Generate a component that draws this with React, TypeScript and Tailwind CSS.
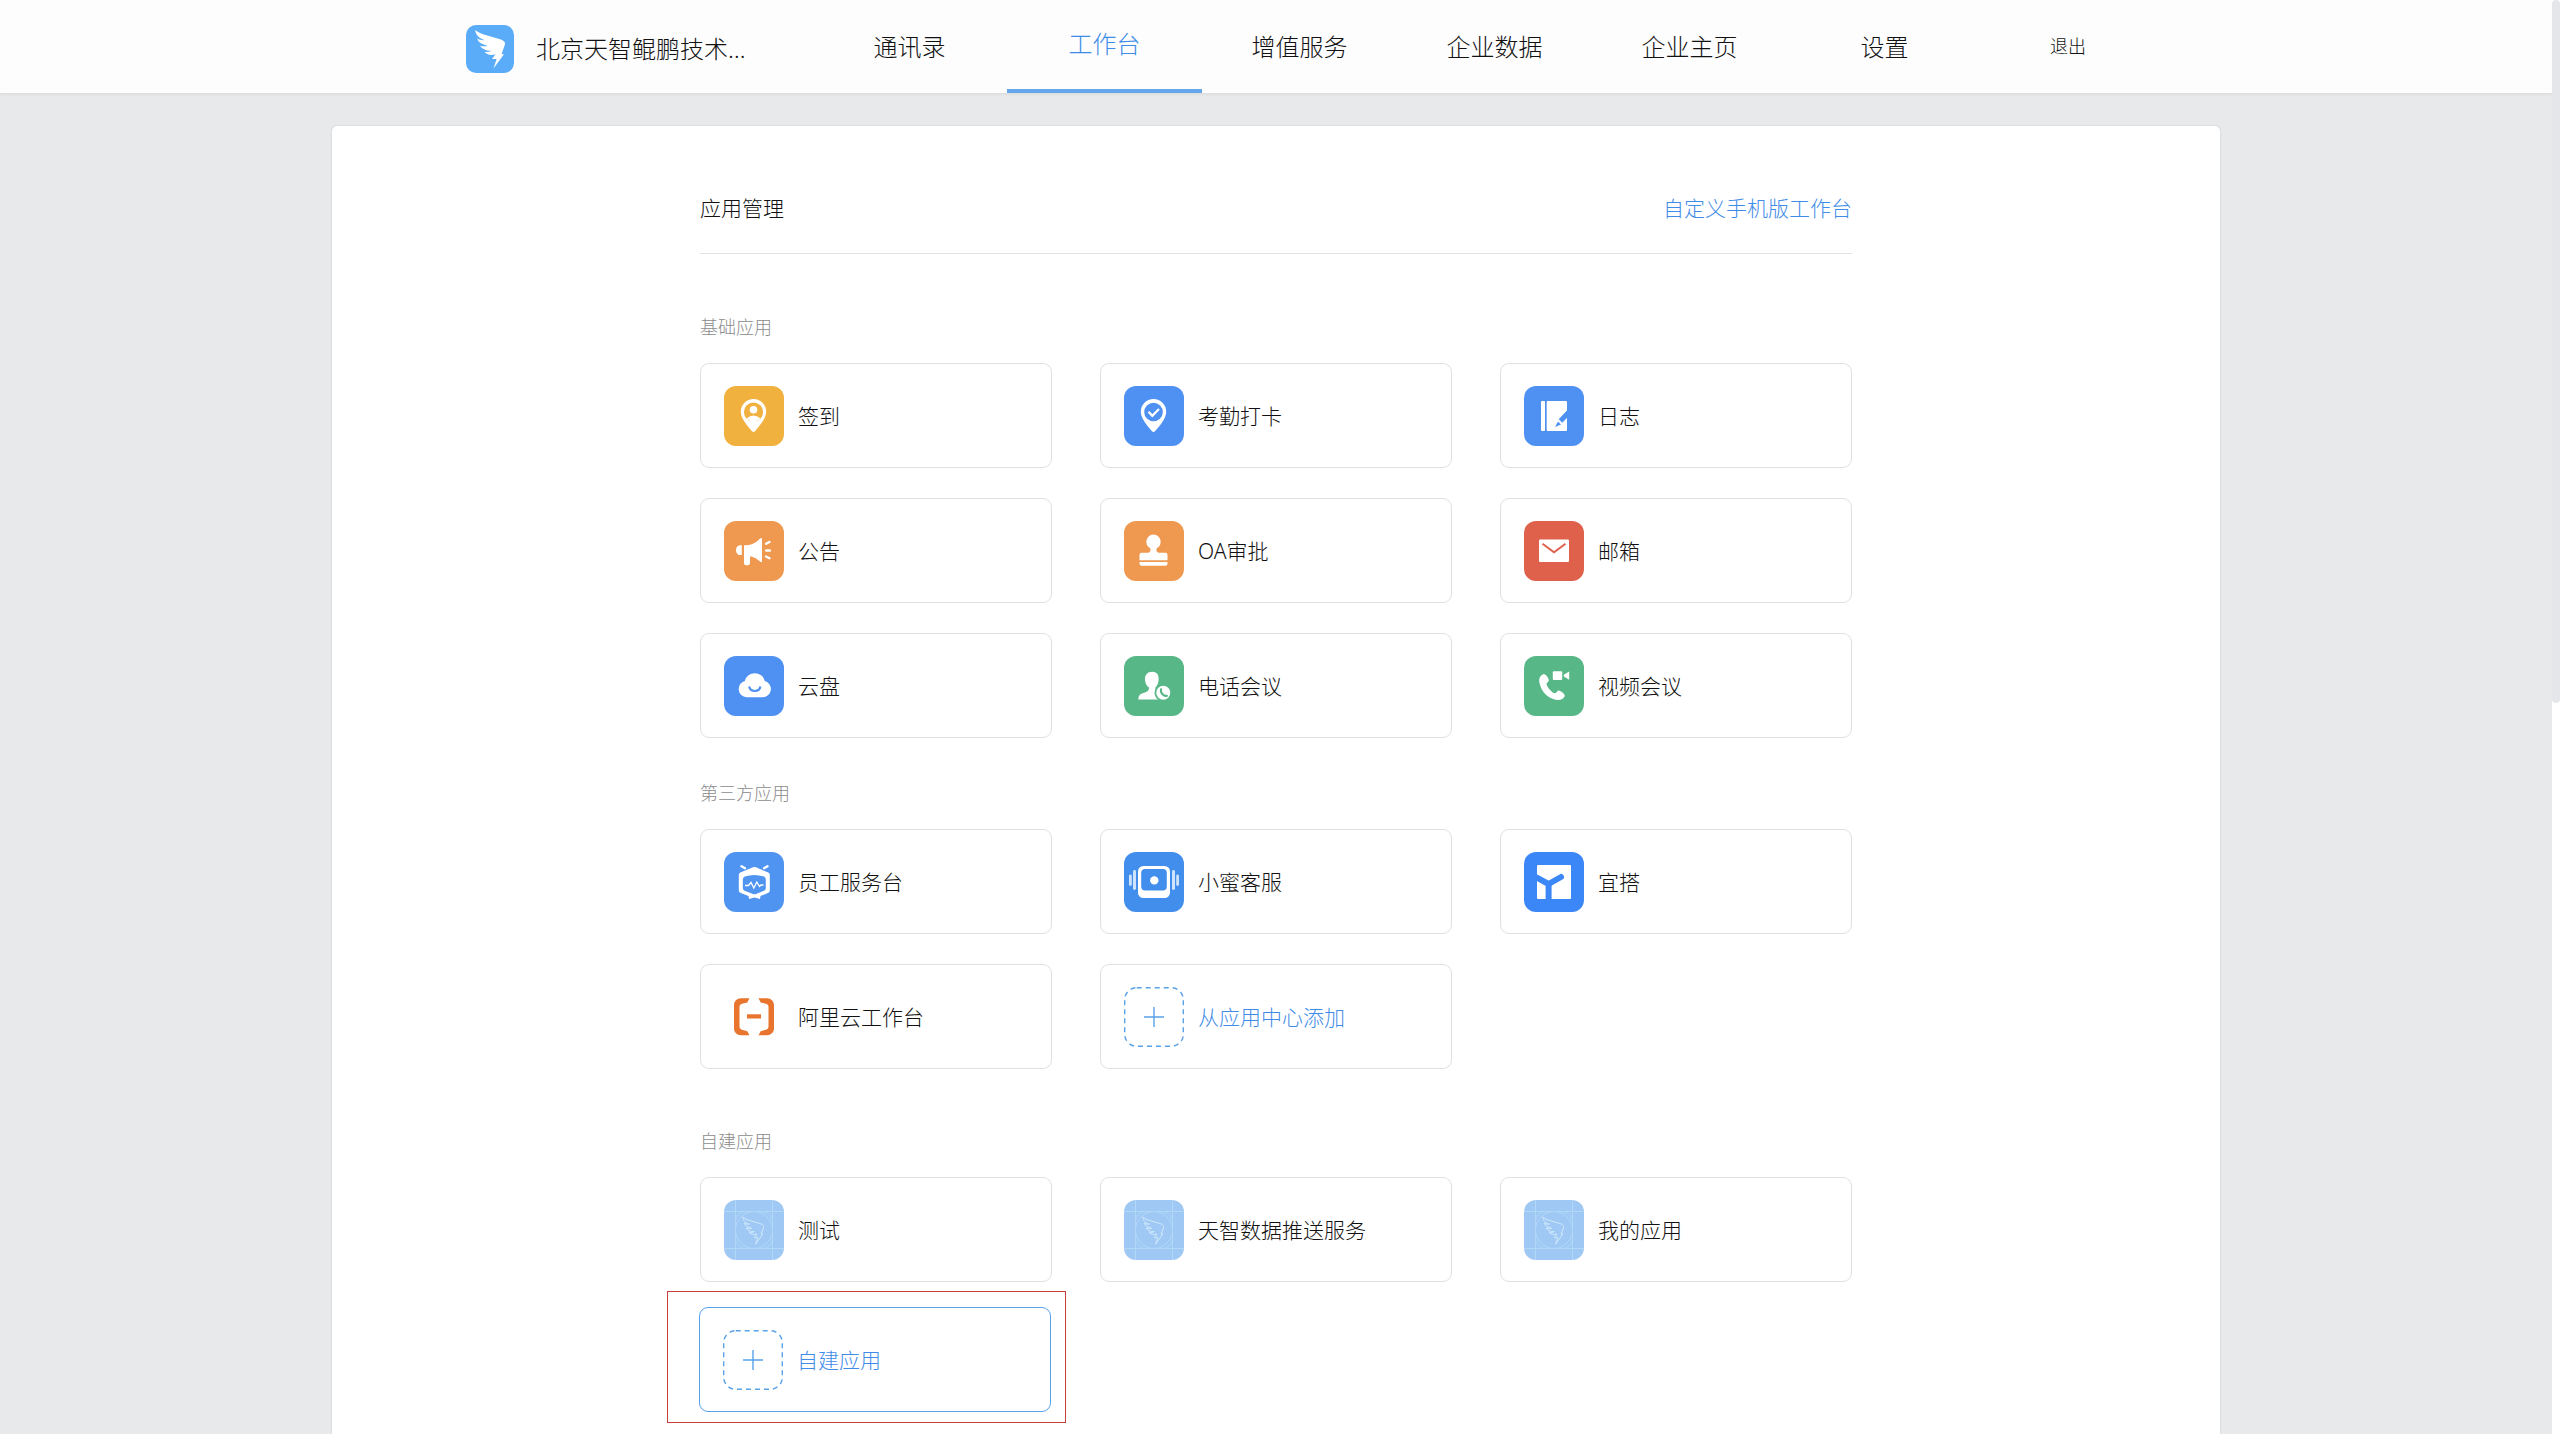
import type { ReactNode } from "react";

const WING =
  "M9.3 5 C14 9.5 26 11.5 34 14.2 C38.5 15.8 39.8 17.2 38.6 20.5 L35.5 29.3 H38 L27.5 43.5 L30.6 34 H26 L29.5 29.3 C24.5 30.8 20.5 29.5 18.3 26.8 C20.8 27.3 23 27 25.5 25.8 C20 26 15.8 23.8 14 20.8 C16.5 21.5 18.8 21.6 21.8 20.8 C15.8 19.6 12 17 11.2 13.6 C13.4 14.8 16 15.4 18.6 15.2 C12.5 13 9.5 9.5 9.3 5 Z";

function Tile({ bg, children }: { bg: string; children: ReactNode }) {
  return (
    <svg viewBox="0 0 60 60" className="size-[60px] shrink-0" aria-hidden="true">
      <rect width="60" height="60" rx="12" fill={bg} />
      {children}
    </svg>
  );
}

const PIN = "M29.5 13 a12.7 12.7 0 0 1 12.7 12.7 C42.2 32 36 39.5 31 45.2 Q29.5 46.8 28 45.2 C23 39.5 16.8 32 16.8 25.7 A12.7 12.7 0 0 1 29.5 13 Z";

const CheckIn = () => (
  <Tile bg="#f0b13f">
    <path d={PIN} fill="#fff" />
    <circle cx="29.5" cy="26" r="9.6" fill="#f0b13f" />
    <circle cx="29.5" cy="23.8" r="3.8" fill="#fff" />
    <path d="M22.5 32.6 Q29.5 26.5 36.5 32.6 L29.5 37 Z" fill="#fff" />
  </Tile>
);

const Attendance = () => (
  <Tile bg="#4f91f2">
    <path d={PIN} fill="#fff" />
    <circle cx="29.5" cy="26" r="9.3" fill="#4f91f2" />
    <path d="M24.5 25.8 L28.3 29.8 L35 23" fill="none" stroke="#fff" strokeWidth="2.2" />
  </Tile>
);

const Journal = () => (
  <Tile bg="#4f91f2">
    <rect x="17" y="15" width="4" height="30" rx="1" fill="#fff" />
    <rect x="22.7" y="15" width="20.3" height="30" rx="1" fill="#fff" />
    <path d="M44.5 26.5 L36.5 35" stroke="#4f91f2" strokeWidth="5" />
    <path d="M34 35.5 L37 38.5 L31 41 Z" fill="#4f91f2" />
    <path d="M34 33.8 L38.7 38.2" stroke="#fff" strokeWidth="1" />
  </Tile>
);

const Notice = () => (
  <Tile bg="#ee9850">
    <path d="M17.8 24.3 V34 H15.8 C13.4 34 12 31.8 12 29.2 C12 26.5 13.4 24.3 15.8 24.3 Z" fill="#fff" />
    <path d="M20 24.3 C27 24.3 31.5 22.5 36 17.5 Q38 16 38 18.5 V40 Q38 42.2 36 40.6 C32.5 37.5 30 36 26 35.2 V42 Q26 44.2 23.8 44.2 H22 Q20 44.2 20 42 Z" fill="#fff" />
    <path d="M42 22.8 L45.5 21 M42.2 29.5 H46 M42 35.5 L45.5 37.3" stroke="#fff" strokeWidth="2.4" strokeLinecap="round" />
  </Tile>
);

const Stamp = () => (
  <Tile bg="#ee9850">
    <circle cx="29.5" cy="20.8" r="7.2" fill="#fff" />
    <path d="M25.8 25 H33.2 C32 28 32 31.5 35 31.8 H41.5 Q43.5 31.8 43.5 34 V39.3 H15.5 V34 Q15.5 31.8 17.5 31.8 H24 C27 31.5 27 28 25.8 25 Z" fill="#fff" />
    <path d="M15.5 41 H43.5 V42.5 Q43.5 44.8 41.5 44.8 H17.5 Q15.5 44.8 15.5 42.5 Z" fill="#fff" />
  </Tile>
);

const Mail = () => (
  <Tile bg="#df614b">
    <rect x="15" y="18.5" width="30" height="22.5" rx="1" fill="#fff" />
    <path d="M18.5 22.8 L30 31.3 L41.5 22.8" fill="none" stroke="#df614b" strokeWidth="2" />
  </Tile>
);

const Cloud = () => (
  <Tile bg="#4f91f2">
    <path d="M22.5 41.3 A8.3 8.3 0 0 1 20.8 25 A10.3 10.3 0 0 1 40.8 25 A8.3 8.3 0 0 1 38.5 41.3 Z" fill="#fff" />
    <path d="M25.2 30.5 Q26 35 30.8 35 Q35.6 35 36.4 30.5" fill="none" stroke="#4f91f2" strokeWidth="2.2" />
  </Tile>
);

const PhoneMeeting = () => (
  <Tile bg="#58b787">
    <path d="M28.3 15.8 C33.5 15.8 35 20 34.6 24 C34.2 28 32.8 30.3 31.5 31.3 V35 L36 38 V43.5 H14.3 Q14.3 38.8 18 37.5 C22 36 25.3 35.6 25 31.5 C22.5 30 21.4 27.5 21 24 C20.6 19 23.5 15.8 28.3 15.8 Z" fill="#fff" />
    <circle cx="39.3" cy="36.8" r="8.8" fill="#58b787" />
    <circle cx="39.3" cy="36.8" r="7" fill="#fff" />
    <path d="M37 33.3 C36 36.5 39.5 40.3 42.8 39.8" fill="none" stroke="#58b787" strokeWidth="2.2" strokeLinecap="round" />
  </Tile>
);

const VideoMeeting = () => (
  <Tile bg="#58b787">
    <path d="M19.5 18 C16 19.5 14.5 23 15.5 27 C17 35 24 43 33 44 C37 44.3 40 42.5 40.8 40 C41 38 36 34.3 34.5 34.6 C33 35 32.5 37.3 31 37.3 C28 37 23 31 22.5 28 C22.5 26.5 25 26 24.8 24 C24.6 22 21.5 17.5 19.5 18 Z" fill="#fff" />
    <rect x="28.8" y="15.2" width="9.4" height="8.8" rx="1" fill="#fff" />
    <path d="M45.2 15.5 V23.7 L39.8 20.4 V18.8 Z" fill="#fff" />
  </Tile>
);

const Robot = () => (
  <Tile bg="#5094f2">
    <path d="M17.5 14.3 L21 16.2 M43.5 14.3 L40 16.2" stroke="#fff" strokeWidth="2.4" strokeLinecap="round" />
    <path d="M29 15.3 Q30.5 14.6 32 15.3 L44.3 20.6 Q45.8 21.3 45.8 23 V38.5 Q45.8 40 44.5 40.8 L36.5 44 L36 47 L30.5 45.5 L25 47 L24.5 44 L16.2 40.8 Q14.8 40 14.8 38.5 V23 Q14.8 21.3 16.3 20.6 Z" fill="#fff" />
    <path d="M18.8 27.5 Q18.8 25.6 20.8 24.6 Q30.3 21.6 40 24.6 Q41.8 25.6 41.8 27.5 V36 Q41.8 38 40 38.8 L32 42 Q30.5 42.6 29 42 L20.6 38.8 Q18.8 38 18.8 36 Z" fill="#5094f2" />
    <path d="M21 33.5 H24.5 L27 30.5 L29.8 36 L32.8 30 L35.5 34.5 L37 33 H39.5" fill="none" stroke="#fff" strokeWidth="1.3" />
  </Tile>
);

const Service = () => (
  <Tile bg="#418eec">
    <rect x="14" y="14" width="32" height="32" rx="5.5" fill="#fff" />
    <rect x="17.2" y="17" width="25.6" height="21.6" rx="4" fill="#418eec" />
    <circle cx="30.3" cy="28.4" r="4.2" fill="#fff" />
    <g fill="#cfe3fb">
      <rect x="9" y="18" width="3" height="20" rx="1.4" />
      <rect x="5" y="22.5" width="2.8" height="11.5" rx="1.4" />
      <rect x="48" y="18" width="3" height="20" rx="1.4" />
      <rect x="52.2" y="22.5" width="2.8" height="11.5" rx="1.4" />
    </g>
  </Tile>
);

const Yida = () => (
  <Tile bg="#3b87f7">
    <rect x="13" y="13" width="34" height="34" rx="1" fill="#fff" />
    <path d="M12 25.2 L24.6 32 V48" fill="none" stroke="#3b87f7" strokeWidth="6" />
    <path d="M24.6 32 L37 25" stroke="#3b87f7" strokeWidth="6" strokeLinecap="round" />
  </Tile>
);

const Aliyun = () => (
  <Tile bg="#fff">
    <g fill="#e8742d">
      <path d="M25.5 11.3 H17 C13 11.3 10 14.3 10 18.3 V41.3 C10 45.3 13 48.3 17 48.3 H25.5 L23.3 44.2 L18 42.8 C16.4 42.3 15.5 41.2 15.5 39.6 V20 C15.5 18.4 16.4 17.3 18 16.8 L23.3 15.4 Z" />
      <path d="M34.5 11.3 H43 C47 11.3 50 14.3 50 18.3 V41.3 C50 45.3 47 48.3 43 48.3 H34.5 L36.7 44.2 L42 42.8 C43.6 42.3 44.5 41.2 44.5 39.6 V20 C44.5 18.4 43.6 17.3 42 16.8 L36.7 15.4 Z" />
      <rect x="23" y="27.3" width="14" height="4.2" />
    </g>
  </Tile>
);

const Blueprint = () => (
  <Tile bg="#9fc8f4">
    <g fill="none" stroke="#b3d8f7" strokeWidth="1">
      <path d="M11.5 0 V60 M48.5 0 V60 M0 11.5 H60 M0 48.5 H60" />
      <rect x="11.5" y="11.5" width="37" height="37" rx="10" />
      <circle cx="30" cy="30" r="18.5" />
    </g>
    <path d={WING} transform="translate(12.3 13.6) scale(0.7)" fill="none" stroke="#d3ecfa" strokeWidth="1.3" />
  </Tile>
);

const AddBox = () => (
  <svg viewBox="0 0 60 60" className="size-[60px] shrink-0" fill="none" stroke="#5aa2e8" aria-hidden="true">
    <rect x="0.7" y="0.7" width="58.6" height="58.6" rx="12" strokeWidth="1.4" strokeDasharray="5 4" />
    <path d="M20 30 H40 M30 20 V40" strokeWidth="1.4" />
  </svg>
);

type App = { name: string; icon: () => ReactNode; add?: boolean };

const basicApps: App[] = [
  { name: "签到", icon: CheckIn },
  { name: "考勤打卡", icon: Attendance },
  { name: "日志", icon: Journal },
  { name: "公告", icon: Notice },
  { name: "OA审批", icon: Stamp },
  { name: "邮箱", icon: Mail },
  { name: "云盘", icon: Cloud },
  { name: "电话会议", icon: PhoneMeeting },
  { name: "视频会议", icon: VideoMeeting },
];

const thirdPartyApps: App[] = [
  { name: "员工服务台", icon: Robot },
  { name: "小蜜客服", icon: Service },
  { name: "宜搭", icon: Yida },
  { name: "阿里云工作台", icon: Aliyun },
  { name: "从应用中心添加", icon: AddBox, add: true },
];

const ownApps: App[] = [
  { name: "测试", icon: Blueprint },
  { name: "天智数据推送服务", icon: Blueprint },
  { name: "我的应用", icon: Blueprint },
];

const tabs = ["通讯录", "工作台", "增值服务", "企业数据", "企业主页", "设置"];

function Card({ app, active = false }: { app: App; active?: boolean }) {
  const Icon = app.icon;
  return (
    <button
      type="button"
      className={`flex h-[105px] w-full items-center gap-[14px] rounded-[9px] border bg-white px-[23px] text-left text-[21px] leading-8 ${
        active ? "border-[#5aa2e8]" : "border-[#dfe0e2]"
      } ${app.add ? "text-[#3f8ce8]" : "text-[#111]"}`}
    >
      <Icon />
      <span>{app.name}</span>
    </button>
  );
}

function Section({ title, apps }: { title: string; apps: App[] }) {
  return (
    <section>
      <h2 className="mb-[22px] text-[18px] leading-7 text-[#8c8c8c]">{title}</h2>
      <div className="grid grid-cols-3 gap-x-12 gap-y-[30px]">
        {apps.map((app) => (
          <Card key={app.name} app={app} />
        ))}
      </div>
    </section>
  );
}

export default function App() {
  return (
    <div className="flex h-screen overflow-hidden bg-[#e8e9eb] font-['Noto_Sans','Noto_Sans_CJK_SC',sans-serif] font-light text-[#111]">
      <div className="flex min-w-0 flex-1 flex-col">
        <header className="bg-[#fdfdfd] shadow-[0_1px_3px_rgba(0,0,0,0.08)]">
          <div className="mx-auto flex h-[93px] max-w-[1620px] items-stretch">
            <div className="flex w-[346px] items-center gap-[22px] pt-1 text-[24px]">
              <svg viewBox="0 0 48 48" className="size-12 shrink-0" role="img" aria-label="DingTalk">
                <rect width="48" height="48" rx="10" fill="#5aabf8" />
                <path d={WING} fill="#fff" />
              </svg>
              <span className="whitespace-nowrap">北京天智鲲鹏技术…</span>
            </div>
            <nav className="flex">
              {tabs.map((tab) => (
                <a
                  key={tab}
                  href="#"
                  aria-current={tab === "工作台" ? "page" : undefined}
                  className={`flex w-[195px] items-center justify-center text-[24px] ${
                    tab === "工作台" ? "border-b-4 border-[#62a8ea] pb-px text-[#3f8ce8]" : ""
                  }`}
                >
                  {tab}
                </a>
              ))}
            </nav>
            <a href="#" className="ml-auto flex items-center text-[18px]">
              退出
            </a>
          </div>
        </header>

        <main className="min-h-0 flex-1 overflow-hidden pt-[33px]">
          <div className="mx-auto min-h-full max-w-[1888px] rounded-t-[5px] bg-white px-6 pb-10 shadow-[0_0_2px_rgba(0,0,0,0.15)]">
            <div className="mx-auto max-w-[1152px]">
              <div className="mb-[59px] flex items-center justify-between border-b border-[#e2e3e4] pt-[66px] pb-[29px] text-[21px] leading-8">
                <h1>应用管理</h1>
                <a href="#" className="text-[#3f8ce8]">
                  自定义手机版工作台
                </a>
              </div>
              <Section title="基础应用" apps={basicApps} />
              <div className="mt-[41px]">
                <Section title="第三方应用" apps={thirdPartyApps} />
              </div>
              <div className="mt-[58px]">
                <Section title="自建应用" apps={ownApps} />
              </div>
              <div className="mt-[9px] -ml-[33px] w-[399px] border border-[#c8403c] pt-[15px] pr-[14px] pb-[10px] pl-[31px]">
                <Card app={{ name: "自建应用", icon: AddBox, add: true }} active />
              </div>
            </div>
          </div>
        </main>
      </div>

      <div className="w-2 bg-white" aria-hidden="true">
        <div className="h-[49%] rounded-[4px] bg-[#e5e6e9]" />
      </div>
    </div>
  );
}
